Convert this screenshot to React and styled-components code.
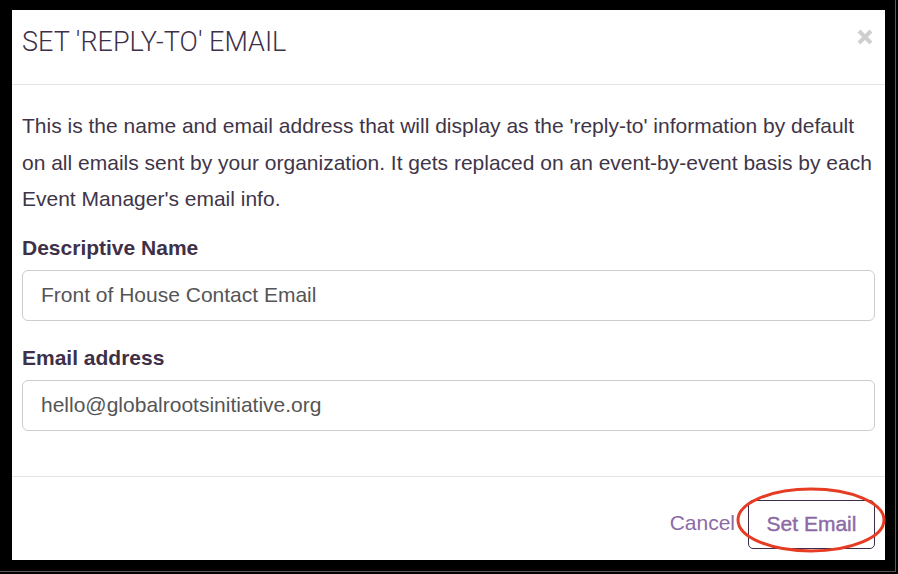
import React from "react";
import styled, { createGlobalStyle } from "styled-components";

const Global = createGlobalStyle`
  html, body { margin: 0; padding: 0; background: #000; }
  * { box-sizing: border-box; }
`;

const Frame = styled.div`
  width: 896px;
  height: 572px;
  padding: 10px 11px 11px 12px;
  border-right: 1px solid #5a5a5a;
  border-bottom: 1px solid #5a5a5a;
  background: #000;
`;

const Modal = styled.div`
  width: 873px;
  height: 550px;
  background: #fff;
  display: flex;
  flex-direction: column;
  font-family: "Liberation Sans", Arial, sans-serif;
`;

const Header = styled.div`
  height: 75px;
  flex: none;
  border-bottom: 1px solid #e5e5e5;
  padding: 0 12px 10px 10px;
  display: flex;
  align-items: center;
  justify-content: space-between;
`;

const Title = styled.h4`
  margin: 0;
  font-family: Roboto, "Liberation Sans", sans-serif;
  font-weight: 300;
  font-size: 27px;
  line-height: 32px;
  color: #3d3047;
`;

const Close = styled.button`
  border: 0;
  background: none;
  padding: 0;
  width: 16px;
  height: 16px;
  margin-top: -11px;
  display: flex;
  cursor: pointer;
`;

const Body = styled.div`
  flex: 1;
  padding: 23px 10px 0;
`;

const Intro = styled.p`
  margin: 0;
  font-size: 21px;
  line-height: 36.5px;
  color: #3f3548;
`;

const Group = styled.div`
  margin-top: ${(p) => p.$gap}px;
`;

const Label = styled.label`
  display: block;
  font-weight: bold;
  font-size: 21px;
  line-height: 25px;
  color: #3f3048;
  margin-bottom: 10px;
`;

const Input = styled.input`
  display: block;
  width: 100%;
  height: 51px;
  border: 1px solid #cdcdcd;
  border-radius: 6px;
  padding: 0 18px;
  font-family: "Liberation Sans", Arial, sans-serif;
  font-size: 21px;
  color: #555;
  background: #fff;
  outline: none;
`;

const Footer = styled.div`
  flex: none;
  height: 84px;
  border-top: 1px solid #e5e5e5;
  padding: 11px 10px 0;
  display: flex;
  align-items: center;
  justify-content: flex-end;
`;

const Cancel = styled.button`
  border: 0;
  background: none;
  padding: 0;
  margin-right: 13px;
  margin-top: -3px;
  font-family: "Liberation Sans", Arial, sans-serif;
  font-size: 21px;
  color: #8c6aa6;
  cursor: pointer;
`;

const PrimaryWrap = styled.div`
  position: relative;
`;

const Primary = styled.button`
  width: 127px;
  height: 49px;
  border: 1px solid #3d2c4c;
  border-radius: 5px;
  background: #fff;
  font-family: "Liberation Sans", Arial, sans-serif;
  font-size: 21px;
  font-weight: normal;
  -webkit-text-stroke: 0.4px #8c6aa6;
  color: #8c6aa6;
  cursor: pointer;
`;

const Annotation = styled.svg`
  position: absolute;
  left: -12px;
  top: -12px;
  width: 150px;
  height: 64px;
  pointer-events: none;
  overflow: visible;
`;

export default function App() {
  return (
    <>
      <Global />
      <Frame>
        <Modal>
          <Header>
            <Title>SET 'REPLY-TO' EMAIL</Title>
            <Close aria-label="Close">
              <svg width="16" height="16" viewBox="0 0 16 16">
                <path d="M2 2 L14 14 M14 2 L2 14" stroke="#cfcfcf" strokeWidth="4" strokeLinecap="butt" />
              </svg>
            </Close>
          </Header>
          <Body>
            <Intro>
              This is the name and email address that will display as the 'reply-to' information by default on all emails sent by your organization. It gets replaced on an event-by-event basis by each Event Manager's email info.
            </Intro>
            <Group $gap={17}>
              <Label>Descriptive Name</Label>
              <Input defaultValue="Front of House Contact Email" />
            </Group>
            <Group $gap={24}>
              <Label>Email address</Label>
              <Input defaultValue="hello@globalrootsinitiative.org" />
            </Group>
          </Body>
          <Footer>
            <Cancel>Cancel</Cancel>
            <PrimaryWrap>
              <Primary>Set Email</Primary>
              <Annotation viewBox="0 0 150 64">
                <ellipse cx="75" cy="32" rx="73" ry="31" fill="none" stroke="#e63c24" strokeWidth="3" />
              </Annotation>
            </PrimaryWrap>
          </Footer>
        </Modal>
      </Frame>
    </>
  );
}
